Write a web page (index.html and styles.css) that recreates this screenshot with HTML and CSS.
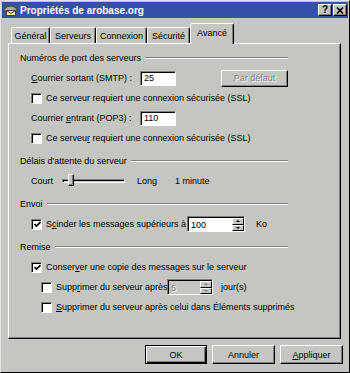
FILE: index.html
```html
<!DOCTYPE html>
<html lang="fr">
<head>
  <meta charset="UTF-8">
  <title>Propriétés de arobase.org</title>
  <link rel="stylesheet" href="styles.css">
</head>
<body>

<div class="window">
  <div class="titlebar">
    <svg class="app-icon" width="15" height="14" viewBox="0 0 15 14">
      <path d="M1 6 Q7.5 0 14 6 L14 8 L1 8 Z" fill="#a8a8a8" stroke="#404040" stroke-width="1"/>
      <rect x="3.5" y="7.5" width="9" height="5" fill="#f0e8a0" stroke="#404040"/>
      <path d="M3.5 7.5 L8 10.5 L12.5 7.5" fill="none" stroke="#404040"/>
    </svg>
    <span class="title">Propriétés de arobase.org</span>
    <div class="caption-buttons">
      <span class="caption-btn">?</span>
      <span class="caption-btn">
        <svg width="8" height="7" viewBox="0 0 8 7"><path d="M1 0.5 L7 6.5 M7 0.5 L1 6.5" stroke="#000" stroke-width="1.6"/></svg>
      </span>
    </div>
  </div>

  <div class="tabs">
    <span class="tab" style="width:39px">Général</span>
    <span class="tab" style="width:46px">Serveurs</span>
    <span class="tab" style="width:51px">Connexion</span>
    <span class="tab" style="width:43px">Sécurité</span>
    <span class="tab active" style="width:44px">Avancé</span>
  </div>

  <div class="panel">
    <section class="group">
      <div class="group-head">Numéros de port des serveurs</div>
      <div class="row">
        <span class="field-label"><u>C</u>ourrier sortant (SMTP) :</span>
        <span class="field">25</span>
        <span class="btn small disabled">Par défaut</span>
      </div>
      <div class="row">
        <span class="check"></span>
        <span>Ce serveur requiert une connexion sécurisée (SSL)</span>
      </div>
      <div class="row">
        <span class="field-label">Courrier <u>e</u>ntrant (POP3) :</span>
        <span class="field">110</span>
      </div>
      <div class="row">
        <span class="check"></span>
        <span>Ce serveu<u>r</u> requiert une connexion sécurisée (SSL)</span>
      </div>
    </section>

    <section class="group">
      <div class="group-head">Délais d'attente du serveur</div>
      <div class="row slider-row">
        <span class="slider-label">Court</span>
        <span class="track"><span class="thumb"></span></span>
        <span class="slider-end">Long</span>
        <span class="slider-value">1 minute</span>
      </div>
    </section>

    <section class="group">
      <div class="group-head">Envoi</div>
      <div class="row">
        <span class="check checked">
          <svg width="7" height="7" viewBox="0 0 7 7"><path d="M0.5 3 L2.5 5 L6.5 1" fill="none" stroke="#000" stroke-width="1.7"/></svg>
        </span>
        <span class="spin-label">S<u>c</u>inder les messages supérieurs à</span>
        <span class="spin wide">
          <span class="spin-value">100</span>
          <span class="spin-arrows"><span class="up"></span><span class="down"></span></span>
        </span>
        <span class="unit">Ko</span>
      </div>
    </section>

    <section class="group">
      <div class="group-head">Remise</div>
      <div class="row">
        <span class="check checked">
          <svg width="7" height="7" viewBox="0 0 7 7"><path d="M0.5 3 L2.5 5 L6.5 1" fill="none" stroke="#000" stroke-width="1.7"/></svg>
        </span>
        <span>Conser<u>v</u>er une copie des messages sur le serveur</span>
      </div>
      <div class="row sub">
        <span class="check"></span>
        <span class="days-label">Supp<u>r</u>imer du serveur après</span>
        <span class="spin disabled">
          <span class="spin-value">5</span>
          <span class="spin-arrows"><span class="up"></span><span class="down"></span></span>
        </span>
        <span class="days-unit">jour(s)</span>
      </div>
      <div class="row sub">
        <span class="check"></span>
        <span><u>S</u>upprimer du serveur après celui dans Éléments supprimés</span>
      </div>
    </section>
  </div>

  <div class="actions">
    <span class="btn default">OK</span>
    <span class="btn">Annuler</span>
    <span class="btn"><u>A</u>ppliquer</span>
  </div>
</div>

</body>
</html>
```

FILE: styles.css
```css
* {
  box-sizing: border-box;
}

body {
  margin: 0;
  font-family: "Liberation Sans", Arial, sans-serif;
  font-size: 9px;
  color: #000;
  background-color: #c5c6c1;
}

u {
  text-decoration-thickness: 1px;
  text-underline-offset: 1px;
}

.window {
  width: 350px;
  height: 373px;
  display: flex;
  flex-direction: column;
  padding: 1px;
  background-color: #c5c6c1;
  border: 1px solid;
  border-color: #e4e4e4 #000 #000 #e4e4e4;
}

/* title bar */

.titlebar {
  height: 16px;
  display: flex;
  align-items: center;
  padding: 0 1px 0 1px;
  background-color: #3552a9;
  color: #fff;
}

.app-icon {
  flex: none;
}

.title {
  margin-left: 2px;
  font-size: 10px;
  font-weight: bold;
}

.caption-buttons {
  margin-left: auto;
  display: flex;
  gap: 1px;
}

.caption-btn {
  width: 14px;
  height: 12px;
  display: flex;
  align-items: center;
  justify-content: center;
  background-color: #c5c6c1;
  border: 1px solid;
  border-color: #fff #000 #000 #fff;
  box-shadow: inset -1px -1px #808080;
  color: #000;
  font-size: 10px;
  font-weight: bold;
  line-height: 1;
}

/* tabs */

.tabs {
  display: flex;
  align-items: flex-end;
  height: 20px;
  margin-top: 5px;
  padding-left: 9px;
  position: relative;
  z-index: 1;
}

.tab {
  height: 16px;
  display: flex;
  align-items: center;
  justify-content: center;
  border: 1px solid;
  border-bottom: none;
  border-color: #fff #000 transparent #fff;
  border-radius: 2px 2px 0 0;
  box-shadow: inset -1px 0 #808080;
  background-color: #c5c6c1;
}

.tab.active {
  height: 21px;
  margin-bottom: -1px;
  padding-bottom: 3px;
}

/* panel */

.panel {
  height: 296px;
  margin: 0 7px 0 6px;
  padding: 4px 52px 0 11px;
  border: 1px solid;
  border-color: #fff #000 #000 #fff;
  box-shadow: inset -1px -1px #808080;
}

.group + .group {
  margin-top: 3px;
}

.group-head {
  height: 20px;
  display: flex;
  align-items: center;
}

.group-head::after {
  content: "";
  flex: 1;
  margin-left: 4px;
  border-top: 1px solid #808080;
  border-bottom: 1px solid #fff;
}

.row {
  height: 20px;
  display: flex;
  align-items: center;
  padding-left: 11px;
  white-space: nowrap;
}

.row > * {
  flex: none;
}

.row.sub {
  padding-left: 21px;
}

.field-label {
  width: 109px;
}

.field {
  width: 36px;
  height: 15px;
  display: flex;
  align-items: center;
  padding-left: 3px;
  background-color: #fff;
  border: 1px solid;
  border-color: #808080 #fff #fff #808080;
  box-shadow: inset 1px 1px #000;
}

.check {
  width: 11px;
  height: 11px;
  margin-right: 4px;
  display: flex;
  align-items: center;
  justify-content: center;
  background-color: #fff;
  border: 1px solid;
  border-color: #808080 #fff #fff #808080;
  box-shadow: inset 1px 1px #000;
}

.check svg {
  margin: 1px 0 0 1px;
}

/* slider */

.slider-label {
  width: 31px;
}

.track {
  width: 63px;
  height: 4px;
  position: relative;
  border: 1px solid;
  border-color: #808080 #fff #fff #808080;
  box-shadow: inset 1px 1px #000;
}

.thumb {
  position: absolute;
  left: 5px;
  top: -6px;
  width: 6px;
  height: 12px;
  background-color: #c5c6c1;
  border: 1px solid;
  border-color: #fff #000 #000 #fff;
  box-shadow: inset -1px -1px #808080;
}

.slider-end {
  width: 38px;
  margin-left: 12px;
}

/* spinners */

.spin-label {
  width: 141px;
}

.days-label {
  width: 111px;
}

.spin {
  width: 46px;
  height: 16px;
  display: flex;
  background-color: #fff;
  border: 1px solid;
  border-color: #808080 #fff #fff #808080;
  box-shadow: inset 1px 1px #000;
  padding: 1px 0 0 1px;
}

.spin.wide {
  width: 58px;
}

.spin-value {
  flex: 1;
  display: flex;
  align-items: center;
  padding-left: 2px;
}

.spin.disabled {
  background-color: #c5c6c1;
}

.spin.disabled .spin-value {
  color: #808080;
  text-shadow: 1px 1px #fff;
}

.spin-arrows {
  width: 12px;
  display: flex;
  flex-direction: column;
}

.spin-arrows span {
  flex: 1;
  display: flex;
  align-items: center;
  justify-content: center;
  background-color: #c5c6c1;
  border: 1px solid;
  border-color: #fff #000 #000 #fff;
}

.spin-arrows .up::after,
.spin-arrows .down::after {
  content: "";
  border-left: 2px solid transparent;
  border-right: 2px solid transparent;
}

.spin-arrows .up::after {
  border-bottom: 2px solid #000;
}

.spin-arrows .down::after {
  border-top: 2px solid #000;
}

.spin.disabled .spin-arrows .up::after {
  border-bottom-color: #808080;
}

.spin.disabled .spin-arrows .down::after {
  border-top-color: #808080;
}

.unit {
  margin-left: 11px;
}

.days-unit {
  margin-left: 8px;
}

/* buttons */

.btn {
  width: 63px;
  height: 19px;
  display: flex;
  align-items: center;
  justify-content: center;
  background-color: #c5c6c1;
  border: 1px solid;
  border-color: #fff #000 #000 #fff;
  box-shadow: inset -1px -1px #808080;
}

.btn.small {
  width: 67px;
  height: 17px;
  margin-left: auto;
}

.btn.disabled {
  color: #808080;
  text-shadow: 1px 1px #fff;
}

.btn.default {
  width: 62px;
  border-color: #000;
  box-shadow: inset 1px 1px #fff, inset -1px -1px #000, inset -2px -2px #808080;
}

.actions {
  display: flex;
  justify-content: flex-end;
  gap: 5px;
  margin-top: 6px;
  padding-right: 5px;
}
```
